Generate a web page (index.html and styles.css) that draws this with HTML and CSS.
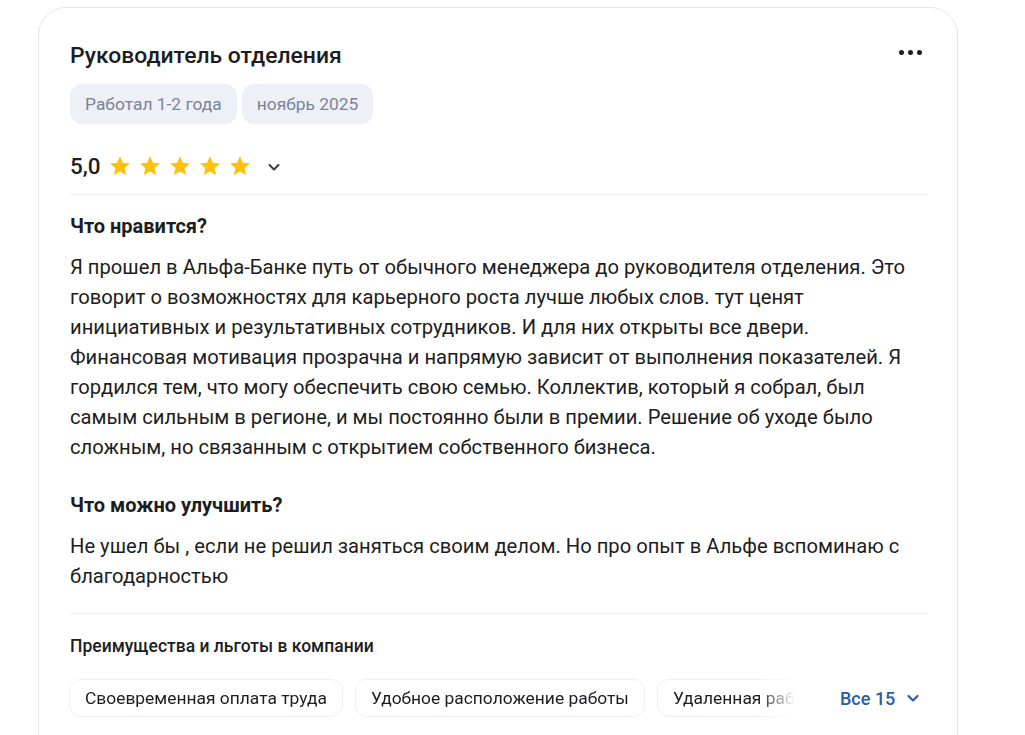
FILE: index.html
```html
<!DOCTYPE html>
<html lang="ru">
<head>
<meta charset="utf-8">
<link rel="stylesheet" href="styles.css">
</head>
<body>
<div class="page">
  <article class="card">
    <header class="head">
      <h2 class="title">Руководитель отделения</h2>
      <button class="more" aria-label="Ещё"><span></span><span></span><span></span></button>
    </header>
    <div class="pills">
      <span class="pill">Работал 1-2 года</span>
      <span class="pill">ноябрь 2025</span>
    </div>
    <div class="rating">
      <span class="score">5,0</span>
      <div class="stars">
        <svg viewBox="0 0 24 24" class="star"><path d="M12 2.2l2.9 6.6 7.1.6-5.4 4.7 1.6 7-6.2-3.7-6.2 3.7 1.6-7L2 9.4l7.1-.6z"/></svg>
        <svg viewBox="0 0 24 24" class="star"><path d="M12 2.2l2.9 6.6 7.1.6-5.4 4.7 1.6 7-6.2-3.7-6.2 3.7 1.6-7L2 9.4l7.1-.6z"/></svg>
        <svg viewBox="0 0 24 24" class="star"><path d="M12 2.2l2.9 6.6 7.1.6-5.4 4.7 1.6 7-6.2-3.7-6.2 3.7 1.6-7L2 9.4l7.1-.6z"/></svg>
        <svg viewBox="0 0 24 24" class="star"><path d="M12 2.2l2.9 6.6 7.1.6-5.4 4.7 1.6 7-6.2-3.7-6.2 3.7 1.6-7L2 9.4l7.1-.6z"/></svg>
        <svg viewBox="0 0 24 24" class="star"><path d="M12 2.2l2.9 6.6 7.1.6-5.4 4.7 1.6 7-6.2-3.7-6.2 3.7 1.6-7L2 9.4l7.1-.6z"/></svg>
      </div>
      <svg class="chev" viewBox="0 0 16 16"><path d="M3.5 6l4.5 4.5L12.5 6" fill="none" stroke="#3a3d44" stroke-width="2" stroke-linecap="round" stroke-linejoin="round"/></svg>
    </div>
    <div class="sep"></div>
    <section class="block">
      <h3 class="q">Что нравится?</h3>
      <p class="text">Я прошел в Альфа-Банке путь от обычного менеджера до руководителя отделения. Это говорит о возможностях для карьерного роста лучше любых слов. тут ценят инициативных и результативных сотрудников. И для них открыты все двери. Финансовая мотивация прозрачна и напрямую зависит от выполнения показателей. Я гордился тем, что могу обеспечить свою семью. Коллектив, который я собрал, был самым сильным в регионе, и мы постоянно были в премии. Решение об уходе было сложным, но связанным с открытием собственного бизнеса.</p>
    </section>
    <section class="block block2">
      <h3 class="q">Что можно улучшить?</h3>
      <p class="text">Не ушел бы , если не решил заняться своим делом. Но про опыт в Альфе вспоминаю с благодарностью</p>
    </section>
    <div class="sep sep2"></div>
    <h4 class="benefits-title">Преимущества и льготы в компании</h4>
    <div class="benefits">
      <div class="chips">
        <span class="chip">Своевременная оплата труда</span>
        <span class="chip">Удобное расположение работы</span>
        <span class="chip">Удаленная работа</span>
      </div>
      <button class="all">Все 15
        <svg viewBox="0 0 16 16"><path d="M3.5 6l4.5 4.5L12.5 6" fill="none" stroke="#2d5ba6" stroke-width="2.2" stroke-linecap="round" stroke-linejoin="round"/></svg>
      </button>
    </div>
  </article>
</div>
</body>
</html>
```
FILE: styles.css
```css
* { box-sizing: border-box; }
html, body { margin: 0; padding: 0; background: #ffffff; }
body {
  font-family: Roboto, "Noto Sans", Arial, sans-serif;
  color: #1c1d21;
  width: 1025px;
  height: 735px;
  overflow: hidden;
}
.page { padding: 7px 0 0 38px; }
.card {
  width: 920px;
  height: 760px;
  border: 1px solid #e3e6ee;
  border-radius: 28px;
  padding: 33px 29px 0 31px;
}
.head {
  display: flex;
  justify-content: space-between;
  align-items: center;
  height: 30px;
}
.title {
  margin: 0;
  font-size: 22.9px;
  font-weight: 500;
  line-height: 30px;
}
.more {
  display: flex;
  gap: 4px;
  background: none;
  border: 0;
  padding: 0;
  margin-right: 6px;
  margin-top: -8px;
}
.more span {
  width: 5px;
  height: 5px;
  border-radius: 50%;
  background: #1c1d21;
}
.pills {
  display: flex;
  gap: 5px;
  margin-top: 13px;
}
.pill {
  height: 40px;
  line-height: 40px;
  padding: 0 15px;
  background: #edf0f7;
  border-radius: 12px;
  font-size: 17.4px;
  color: #7b8496;
}
.rating {
  display: flex;
  align-items: center;
  height: 28px;
  margin-top: 28px;
}
.score {
  font-size: 22.5px;
  font-weight: 500;
  line-height: 28px;
  margin-right: 7px;
}
.stars { display: flex; gap: 6px; }
.star { width: 24px; height: 24px; fill: #ffc10a; }
.chev { width: 16px; height: 16px; margin-left: 14px; margin-top: 1px; }
.sep {
  height: 1px;
  background: #eff1f5;
  margin-top: 14px;
}
.block { margin-top: 19px; }
.q {
  margin: 0;
  font-size: 20px;
  font-weight: 700;
  line-height: 24px;
}
.text {
  margin: 14px 0 0 0;
  font-size: 20.2px;
  line-height: 30px;
}
.block2 { margin-top: 31px; }
.sep2 { margin-top: 22px; }
.benefits-title {
  margin: 20px 0 0 0;
  font-size: 17.5px;
  font-weight: 500;
  line-height: 24px;
}
.benefits {
  display: flex;
  align-items: center;
  margin-top: 21px;
}
.chips {
  display: flex;
  gap: 12px;
  width: 726px;
  flex: none;
  margin-left: -1px;
  overflow: hidden;
  -webkit-mask-image: linear-gradient(to right, #000 690px, transparent 726px);
  mask-image: linear-gradient(to right, #000 690px, transparent 726px);
}
.chip {
  flex: none;
  height: 38px;
  line-height: 36px;
  padding: 0 15px;
  border: 1px solid #edf0f5;
  border-radius: 12px;
  font-size: 17.4px;
  white-space: nowrap;
}
.all {
  display: flex;
  align-items: center;
  gap: 10px;
  margin-left: 45px;
  background: none;
  border: 0;
  padding: 0;
  font-family: inherit;
  font-size: 18px;
  font-weight: 500;
  color: #2d5ba6;
}
.all svg { width: 16px; height: 16px; }
```
